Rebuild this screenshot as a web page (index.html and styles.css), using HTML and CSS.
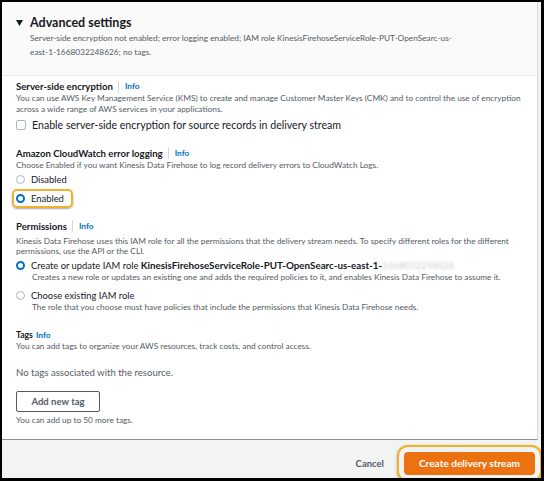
FILE: index.html
```html
<!DOCTYPE html>
<html lang="en">
<head>
<meta charset="utf-8">
<title>Advanced settings</title>
<link rel="stylesheet" href="styles.css">
</head>
<body>
<div class="frame">
  <div class="main">
    <section class="panel">
      <header class="panel-head">
        <h2 class="title"><svg class="caret" width="7" height="6" viewBox="0 0 7 6"><path d="M0 0H7L3.5 6Z" fill="#16191f"/></svg>Advanced settings</h2>
        <p class="summary">Server-side encryption not enabled; error logging enabled; IAM role KinesisFirehoseServiceRole-PUT-OpenSearc-us-east-1-1668032248626; no tags.</p>
      </header>
      <div class="panel-body">
        <div class="field">
          <div class="label">Server-side encryption <span class="sep"></span><a class="info">Info</a></div>
          <p class="desc">You can use AWS Key Management Service (KMS) to create and manage Customer Master Keys (CMK) and to control the use of encryption across a wide range of AWS services in your applications.</p>
          <label class="option opt-check"><span class="checkbox"></span>Enable server-side encryption for source records in delivery stream</label>
        </div>

        <div class="field">
          <div class="label">Amazon CloudWatch error logging <span class="sep"></span><a class="info">Info</a></div>
          <p class="desc">Choose Enabled if you want Kinesis Data Firehose to log record delivery errors to CloudWatch Logs.</p>
          <label class="option opt-first"><span class="radio"></span>Disabled</label>
          <label class="option opt-focus"><span class="focus-ring"><span class="radio checked"></span>Enabled</span></label>
        </div>

        <div class="field field-perm">
          <div class="label">Permissions <span class="sep"></span><a class="info">Info</a></div>
          <p class="desc">Kinesis Data Firehose uses this IAM role for all the permissions that the delivery stream needs. To specify different roles for the different permissions, use the API or the CLI.</p>
          <div class="choice">
            <label class="option"><span class="radio checked"></span>Create or update IAM role&nbsp;<b>KinesisFirehoseServiceRole-PUT-OpenSearc-us-east-1-</b><span class="blurred">1668032248626</span></label>
            <p class="subdesc">Creates a new role or updates an existing one and adds the required policies to it, and enables Kinesis Data Firehose to assume it.</p>
          </div>
          <div class="choice choice-2">
            <label class="option"><span class="radio"></span>Choose existing IAM role</label>
            <p class="subdesc">The role that you choose must have policies that include the permissions that Kinesis Data Firehose needs.</p>
          </div>
        </div>

        <div class="field field-tags">
          <div class="label label-small">Tags <a class="info">Info</a></div>
          <p class="desc">You can add tags to organize your AWS resources, track costs, and control access.</p>
          <p class="empty">No tags associated with the resource.</p>
          <button class="btn-normal" type="button">Add new tag</button>
          <p class="desc hint">You can add up to 50 more tags.</p>
        </div>
      </div>
    </section>
    <div class="gutter"></div>
  </div>
  <footer class="actions">
    <button class="btn-link" type="button">Cancel</button>
    <button class="btn-primary" type="button">Create delivery stream</button>
  </footer>
</div>
</body>
</html>
```

FILE: styles.css
```css
* { box-sizing: border-box; }
html, body { margin: 0; padding: 0; }
body {
  background: #000;
  width: 544px;
  height: 481px;
  font-family: "Lato", "Open Sans", sans-serif;
  color: #16191f;
}
.frame {
  margin: 2px 3px 0 2px;
  height: 476px;
  display: flex;
  flex-direction: column;
  background: #f2f3f3;
  overflow: hidden;
}
.main {
  display: flex;
  flex: 0 0 auto;
}
.panel {
  flex: 1 1 auto;
  background: #fff;
  border-right: 1px solid #d5dbdb;
  border-bottom: 1px solid #879596;
}
.gutter {
  width: 4px;
  background: #f2f3f3;
}
.panel-head {
  background: #fafafa;
  border-bottom: 1px solid #eaeded;
  padding: 13px 14px 16px 14px;
}
.title {
  margin: 0;
  display: flex;
  align-items: center;
  font-size: 12.5px;
  line-height: 16px;
  font-weight: 700;
}
.caret { margin-right: 7px; }
.summary {
  margin: 0 56px 0 14px;
  font-size: 8.3px;
  line-height: 14px;
  color: #545b64;
}
.panel-body {
  padding: 4px 14px 13px 14px;
}
.field + .field { margin-top: 14.5px; }
.label {
  display: flex;
  align-items: center;
  font-size: 9.6px;
  line-height: 13px;
  font-weight: 700;
}
.sep {
  display: inline-block;
  width: 1px;
  height: 12px;
  background: #d5dbdb;
  margin: 0 6px 0 5px;
}
.info {
  color: #0073bb;
  font-size: 8.3px;
  font-weight: 700;
}
.label-small { font-size: 8.6px; line-height: 11px; }
.label-small .info { margin-left: 3px; }
.desc, .subdesc, .empty {
  margin: 0;
  font-size: 8.3px;
  line-height: 10.5px;
  color: #545b64;
}
.field-perm .desc { margin-top: 3px; }
.subdesc { padding-left: 16px; }
.option {
  display: flex;
  align-items: center;
  font-size: 9.4px;
  line-height: 13px;
}
.opt-check {
  margin-top: 4px;
  font-size: 10.6px;
  line-height: 14px;
}
.opt-first { margin-top: 3px; }
.opt-focus { margin-top: 2.5px; }
.checkbox {
  width: 10px;
  height: 10px;
  border: 1px solid #aab7b8;
  border-radius: 2px;
  margin-right: 6px;
  background: #fff;
}
.radio {
  width: 9px;
  height: 9px;
  border: 1px solid #aab7b8;
  border-radius: 50%;
  margin-right: 6px;
  background: #fff;
  flex: 0 0 auto;
}
.radio.checked { border: 2.6px solid #0073bb; }
.focus-ring {
  display: flex;
  align-items: center;
  margin-left: -4px;
  padding: 0 7px 0 2px;
  line-height: 15px;
  border: 2px solid #f2b12c;
  border-radius: 5px;
  box-shadow: 0 1px 2px rgba(0,0,0,0.35);
}
.field-perm { margin-top: 12px !important; }
.choice { margin-top: 2.75px; }
.choice-2 { margin-top: 6.5px; }
.option b { font-weight: 700; font-size: 9.8px; }
.blurred {
  color: #c9ced1;
  filter: blur(1px);
  font-size: 9.6px;
}
.field-tags { margin-top: 17px !important; }
.empty {
  margin-top: 14.7px;
  font-size: 9.6px;
  line-height: 13px;
}
.btn-normal {
  display: block;
  margin-top: 12px;
  width: 84px;
  height: 21px;
  border: 1px solid #545b64;
  border-radius: 2px;
  background: #fff;
  color: #545b64;
  font-family: inherit;
  font-size: 9.5px;
  font-weight: 700;
  padding: 0;
}
.hint { margin-top: 3.5px; }
.actions {
  flex: 1 1 auto;
  display: flex;
  justify-content: flex-end;
  align-items: flex-start;
  padding: 12px 6px 0 0;
}
.btn-link {
  background: none;
  border: 0;
  color: #545b64;
  font-family: inherit;
  font-size: 9.5px;
  font-weight: 700;
  height: 23px;
  padding: 0 8px;
  margin-right: 12px;
}
.btn-primary {
  display: block;
  width: 131px;
  height: 23px;
  background: #ec7211;
  border: 0;
  border-radius: 4px;
  color: #fff;
  font-family: inherit;
  font-size: 10.1px;
  font-weight: 700;
  padding: 0;
  box-shadow: 0 0 0 5px #f2f3f3, 0 0 0 7px #f2b12c, 0 1px 3px 7px rgba(0,0,0,0.3);
}
```
